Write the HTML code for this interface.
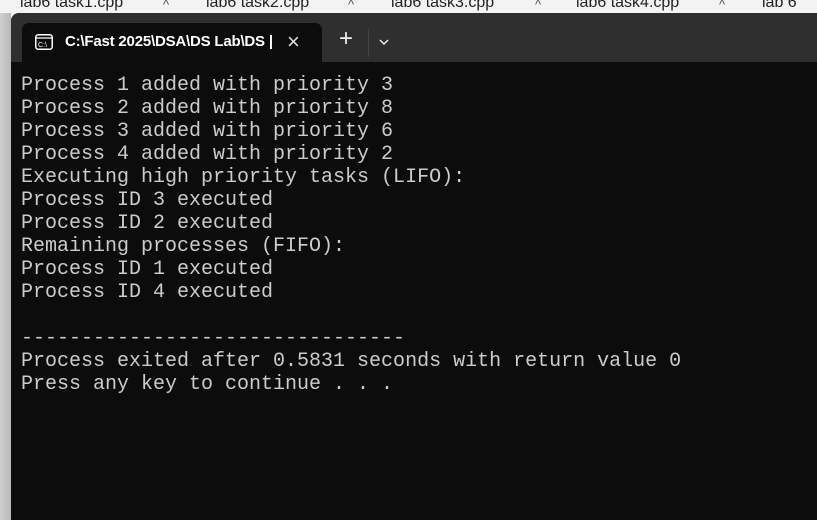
<!DOCTYPE html>
<html><head><meta charset="utf-8"><style>
html,body{margin:0;padding:0;width:817px;height:520px;overflow:hidden;background:#f0f0f0;font-family:"Liberation Sans",sans-serif}
.strip{position:absolute;left:0;top:0;width:817px;height:13px;background:#f3f3f3;overflow:hidden}
.strip span{position:absolute;top:-6px;font-size:16px;color:#222}
.strip i{position:absolute;top:-3px;font-style:normal;font-size:13px;color:#555}
.leftm{position:absolute;left:0;top:13px;width:11px;height:507px;background:linear-gradient(to right,#d0d0d0,#b8b8b8)}
.win{position:absolute;left:11px;top:13px;width:806px;height:507px;background:#0c0c0c;border-top-left-radius:8px;overflow:hidden}
.title{position:absolute;left:0;top:0;width:100%;height:49px;background:#2f2f2f}
.tab{position:absolute;left:11px;top:10px;width:300px;height:39px;background:#0c0c0c;border-radius:7px 7px 0 0}
.tab .t{position:absolute;left:43px;top:10px;font-size:15px;font-weight:bold;color:#fff;letter-spacing:-0.2px}
.tab .x{position:absolute;left:265px;top:6px;font-size:22px;color:#ddd}
.plus{position:absolute;left:328px;top:15px;font-size:24px;color:#eee;line-height:22px}
.sep{position:absolute;left:357px;top:16px;width:1px;height:28px;background:#444}
.chev{position:absolute;left:367px;top:25px}
pre{position:absolute;left:10px;top:61px;margin:0;font-family:"Liberation Mono",monospace;font-size:20px;line-height:23px;color:#cccccc}
</style></head><body>
<div class="strip">
<span style="left:20px">lab6 task1.cpp</span><i style="left:163px">^</i>
<span style="left:206px">lab6 task2.cpp</span><i style="left:348px">^</i>
<span style="left:391px">lab6 task3.cpp</span><i style="left:535px">^</i>
<span style="left:576px">lab6 task4.cpp</span><i style="left:719px">^</i>
<span style="left:762px">lab 6 task</span>
</div>
<div class="leftm"></div>
<div class="win">
<div class="title">
<div class="tab">
<svg style="position:absolute;left:13px;top:11px" width="18" height="16" viewBox="0 0 18 16"><rect x="0.75" y="0.75" width="16.5" height="14.5" rx="2.5" fill="none" stroke="#fff" stroke-width="1.5"/><line x1="1" y1="4" x2="17" y2="4" stroke="#fff" stroke-width="1.2"/><text x="3" y="13" font-size="7" fill="#fff" font-family="Liberation Sans">C:\</text></svg>
<div class="t">C:\Fast 2025\DSA\DS Lab\DS |</div>
<div class="x">×</div>
</div>
<div class="plus">+</div>
<div class="sep"></div>
<svg class="chev" width="12" height="8" viewBox="0 0 12 8"><path d="M2 2 L6 6 L10 2" fill="none" stroke="#eee" stroke-width="1.5"/></svg>
</div>
<pre>Process 1 added with priority 3
Process 2 added with priority 8
Process 3 added with priority 6
Process 4 added with priority 2
Executing high priority tasks (LIFO):
Process ID 3 executed
Process ID 2 executed
Remaining processes (FIFO):
Process ID 1 executed
Process ID 4 executed

--------------------------------
Process exited after 0.5831 seconds with return value 0
Press any key to continue . . .</pre>
</div>
</body></html>
